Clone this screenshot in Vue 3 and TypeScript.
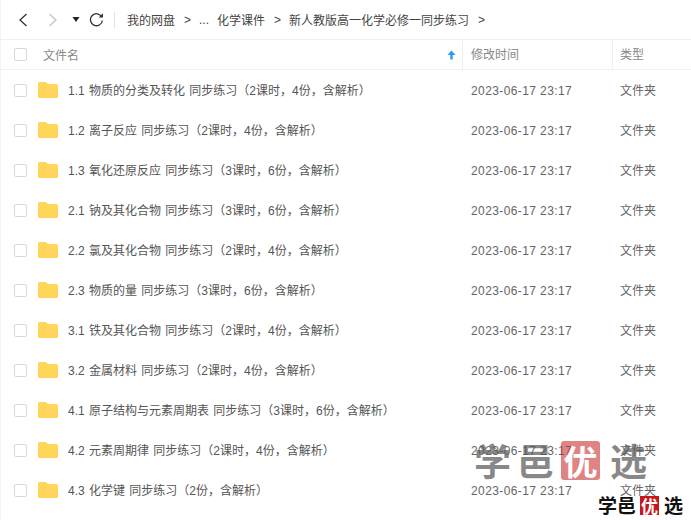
<script setup lang="ts">
const rows: string[] = [
  '1.1 物质的分类及转化 同步练习（2课时，4份，含解析）',
  '1.2 离子反应 同步练习（2课时，4份，含解析）',
  '1.3 氧化还原反应 同步练习（3课时，6份，含解析）',
  '2.1 钠及其化合物 同步练习（3课时，6份，含解析）',
  '2.2 氯及其化合物 同步练习（2课时，4份，含解析）',
  '2.3 物质的量 同步练习（3课时，6份，含解析）',
  '3.1 铁及其化合物 同步练习（2课时，4份，含解析）',
  '3.2 金属材料 同步练习（2课时，4份，含解析）',
  '4.1 原子结构与元素周期表 同步练习（3课时，6份，含解析）',
  '4.2 元素周期律 同步练习（2课时，4份，含解析）',
  '4.3 化学键 同步练习（2份，含解析）',
]
</script>

<template>
  <div class="page">
    <div class="toolbar">
      <svg class="nav" width="12" height="16" viewBox="0 0 12 16"><path d="M9.5 2 L3 8 L9.5 14" fill="none" stroke="#333" stroke-width="1.3" /></svg>
      <svg class="nav fwd" width="12" height="16" viewBox="0 0 12 16"><path d="M2.5 2 L9 8 L2.5 14" fill="none" stroke="#c4c4c4" stroke-width="1.3" /></svg>
      <svg class="caret" width="8" height="5" viewBox="0 0 8 5"><path d="M0.5 0 H7.5 L4 5 Z" fill="#222" /></svg>
      <svg class="refresh" width="15" height="15" viewBox="0 0 15 15"><path d="M12.8 5 A6 6 0 1 0 13.4 8.5" fill="none" stroke="#333" stroke-width="1.3" /><path d="M9.6 5.6 H14 V1.2 Z" fill="#333" /></svg>
      <span class="divider"></span>
      <div class="crumbs">
        <span>我的网盘</span><span class="sep">&gt;</span><span class="dots">...</span><span>化学课件</span><span class="sep">&gt;</span><span>新人教版高一化学必修一同步练习</span><span class="sep">&gt;</span>
      </div>
    </div>

    <div class="row head">
      <span class="check"></span>
      <div class="col-name head-name">
        <span>文件名</span>
        <svg class="sort" width="9" height="10" viewBox="0 0 9 10"><path d="M4.5 0.5 L8.5 5 H5.7 V9.5 H3.3 V5 H0.5 Z" fill="#2b9bf4" /></svg>
      </div>
      <div class="col-time bar">修改时间</div>
      <div class="col-type bar">类型</div>
    </div>

    <div v-for="r in rows" :key="r" class="row item">
      <span class="check"></span>
      <div class="col-name">
        <svg class="folder" width="20" height="16" viewBox="0 0 20 16"><path d="M1.5 0 H7.5 L10 2 H18.5 A1.5 1.5 0 0 1 20 3.5 V14.5 A1.5 1.5 0 0 1 18.5 16 H1.5 A1.5 1.5 0 0 1 0 14.5 V1.5 A1.5 1.5 0 0 1 1.5 0 Z" fill="#ffd659" /></svg>
        <span class="fname">{{ r }}</span>
      </div>
      <div class="col-time stamp">2023-06-17 23:17</div>
      <div class="col-type cell-type">文件夹</div>
    </div>

    <div class="mark big">
      <span class="ink">学邑</span><span class="seal">优</span><span>选</span>
    </div>
    <div class="mark small">
      <span>学邑</span><span class="seal">优</span><span>选</span>
    </div>
  </div>
</template>

<style scoped>
.page {
  position: relative;
  width: 691px;
  height: 520px;
  overflow: hidden;
  background: #fff;
  box-shadow: inset 1px 0 #f5f5f5;
  font-family: "Liberation Sans", "Noto Sans CJK SC", sans-serif;
  font-size: 12px;
  color: #666;
}
.toolbar {
  display: flex;
  align-items: center;
  height: 39px;
  padding-left: 17px;
  border-bottom: 1px solid #f0f0f0;
}
.fwd { margin-left: 18px; }
.caret { margin-left: 13px; }
.refresh { margin-left: 9px; margin-top: -1px; }
.divider {
  width: 1px;
  height: 16px;
  background: #e3e3e3;
  margin-left: 10px;
}
.crumbs {
  display: flex;
  align-items: center;
  margin-left: 12px;
  color: #444;
}
.sep { margin: 0 8px 0 9px; }
.dots { margin-right: 8px; }
.row {
  display: flex;
  align-items: center;
  padding-left: 14px;
}
.head {
  height: 29px;
  border-bottom: 1px solid #f0f0f0;
  color: #888;
}
.item { height: 40px; }
.check {
  flex: none;
  width: 11px;
  height: 11px;
  border: 1px solid #d9d9d9;
  border-radius: 2px;
}
.col-name {
  display: flex;
  align-items: center;
  flex: none;
  width: 435px;
  padding-left: 11px;
  box-sizing: border-box;
}
.head-name {
  padding-left: 16px;
  padding-right: 6px;
  justify-content: space-between;
}
.folder { margin-right: 10px; flex: none; }
.fname { color: #555; white-space: nowrap; word-spacing: 1px; padding-bottom: 2px; }
.col-time {
  flex: none;
  width: 150px;
  padding-left: 9px;
  box-sizing: border-box;
}
.stamp {
  letter-spacing: 0.4px;
  padding-top: 1px;
}
.col-type {
  flex: none;
  padding-left: 8px;
}
.cell-type { padding-bottom: 2px; }
.bar {
  height: 29px;
  line-height: 31px;
  border-left: 1px solid #f0f0f0;
  box-sizing: border-box;
  padding-left: 8px;
}
.col-type.bar { width: 79px; padding-left: 7px; }
.mark {
  position: absolute;
  display: flex;
  align-items: center;
  font-family: "Noto Sans CJK SC", sans-serif;
  font-weight: 700;
}
.big {
  left: 474px;
  top: 439px;
  font-size: 37px;
  line-height: 42px;
  color: rgba(90, 90, 90, 0.72);
}
.big .ink { letter-spacing: 6px; }
.big .seal {
  width: 39px;
  height: 39px;
  margin: 0 10px 0 1px;
  font-size: 34px;
  line-height: 39px;
  text-align: center;
  color: #fff;
  background: rgba(200, 50, 50, 0.6);
  border-radius: 3px;
}
.small {
  left: 598px;
  top: 494px;
  font-size: 19px;
  line-height: 22px;
  color: #111;
}
.small .seal {
  width: 19px;
  height: 19px;
  margin: 0 5px 0 4px;
  font-size: 17px;
  line-height: 19px;
  text-align: center;
  color: #fff;
  background: #c8161d;
}
</style>
